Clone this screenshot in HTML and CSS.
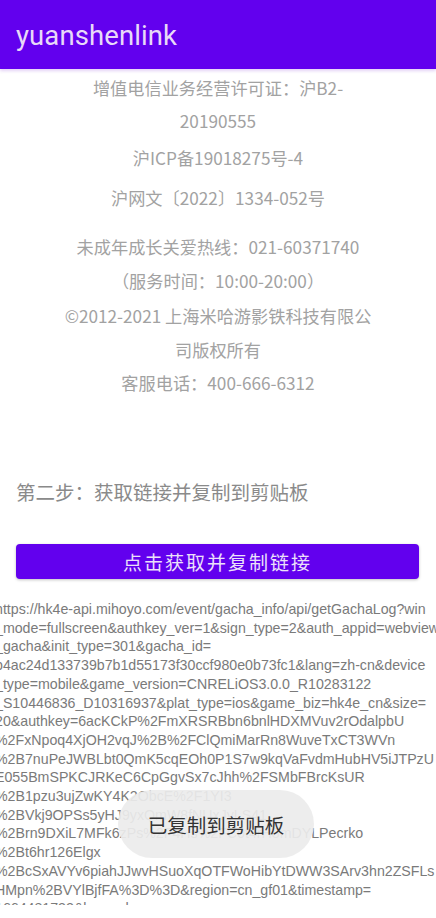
FILE: index.html
```html
<!DOCTYPE html>
<html lang="zh-CN">
<head>
<meta charset="utf-8">
<title>yuanshenlink</title>
<link rel="stylesheet" href="styles.css">
</head>
<body>
<header class="appbar">
  <h1 class="appbar-title">yuanshenlink</h1>
</header>
<main class="content">
  <section class="info">
    <p class="info-p p1">增值电信业务经营许可证：沪B2-<br>20190555</p>
    <p class="info-p p2">沪ICP备19018275号-4</p>
    <p class="info-p p3">沪网文〔2022〕1334-052号</p>
    <p class="info-p p4">未成年成长关爱热线：021-60371740<br>（服务时间：10:00-20:00）</p>
    <p class="info-p p5">©2012-2021 上海米哈游影铁科技有限公<br>司版权所有</p>
    <p class="info-p p6">客服电话：400-666-6312</p>
  </section>
  <p class="step">第二步：获取链接并复制到剪贴板</p>
  <button class="btn">点击获取并复制链接</button>
  <div class="url">
    <div>https://hk4e-api.mihoyo.com/event/gacha_info/api/getGachaLog?win</div>
    <div>_mode=fullscreen&amp;authkey_ver=1&amp;sign_type=2&amp;auth_appid=webview</div>
    <div>_gacha&amp;init_type=301&amp;gacha_id=</div>
    <div>b4ac24d133739b7b1d55173f30ccf980e0b73fc1&amp;lang=zh-cn&amp;device</div>
    <div>_type=mobile&amp;game_version=CNRELiOS3.0.0_R10283122</div>
    <div>_S10446836_D10316937&amp;plat_type=ios&amp;game_biz=hk4e_cn&amp;size=</div>
    <div>20&amp;authkey=6acKCkP%2FmXRSRBbn6bnlHDXMVuv2rOdalpbU</div>
    <div>%2FxNpoq4XjOH2vqJ%2B%2FClQmiMarRn8WuveTxCT3WVn</div>
    <div>%2B7nuPeJWBLbt0QmK5cqEOh0P1S7w9kqVaFvdmHubHV5iJTPzU</div>
    <div>E055BmSPKCJRKeC6CpGgvSx7cJhh%2FSMbFBrcKsUR</div>
    <div>%2B1pzu3ujZwKY4K2ObcE%2F1YI3</div>
    <div>%2BVkj9OPSs5yHJ9yxQmW8fNUxJyLS41</div>
    <div>%2Brn9DXiL7MFk6zPs%2F4Hs%2FC0t4rH8mDYLPecrko</div>
    <div>%2Bt6hr126Elgx</div>
    <div>%2BcSxAVYv6piahJJwvHSuoXqOTFWoHibYtDWW3SArv3hn2ZSFLs</div>
    <div>HMpn%2BVYlBjfFA%3D%3D&amp;region=cn_gf01&amp;timestamp=</div>
    <div>1664481732&amp;lang=zh-cn</div>
  </div>
</main>
<div class="toast">已复制到剪贴板</div>
</body>
</html>
```

FILE: styles.css
```css
html, body {
  margin: 0;
  padding: 0;
  height: 918px;
  overflow: hidden;
  background: #ffffff;
}

body {
  font-family: "Noto Sans CJK SC", "Noto Sans", sans-serif;
  position: relative;
}

.appbar {
  height: 69px;
  background: #6200ee;
  box-shadow: 0 2px 3px rgba(150, 80, 220, 0.25);
  display: flex;
  align-items: center;
  padding: 0 16px;
  position: relative;
  z-index: 1;
}

.appbar-title {
  margin: 0;
  font-family: "Roboto", "Liberation Sans", sans-serif;
  font-weight: 400;
  font-size: 27.5px;
  color: #e8d9f8;
  letter-spacing: 0.1px;
  position: relative;
  top: 1px;
}

.content {
  display: flex;
  flex-direction: column;
}

.info {
  padding-top: 2px;
  text-align: center;
  color: #a2a2a2;
  font-size: 17.2px;
}

.info-p {
  margin: 0;
  line-height: 34px;
}

.p1 { line-height: 33px; }
.p2 { margin-top: 4px; }
.p3 { margin-top: 6px; }
.p4 { margin-top: 15px; }
.p5 { margin-top: 1px; }
.p6 { margin-top: -1px; }

.step {
  margin: 78px 0 0 16px;
  font-size: 19.5px;
  line-height: 28px;
  color: #8a8a8a;
}

.btn {
  margin: 38px 17px 0 16px;
  height: 35px;
  border: none;
  border-radius: 4px;
  background: #6200ee;
  color: #ece0fa;
  font-family: "Noto Sans CJK SC", sans-serif;
  font-size: 19px;
  letter-spacing: 2px;
  padding: 0;
  box-shadow: 0 1px 3px rgba(0, 0, 0, 0.25);
}

.url {
  margin: 21px 0 0 -5px;
  height: 305px;
  overflow: hidden;
  font-family: "Liberation Sans", Arial, sans-serif;
  font-size: 14.2px;
  line-height: 18.7px;
  color: #7a7a7a;
  white-space: nowrap;
}

.toast {
  position: absolute;
  left: 118px;
  top: 790px;
  width: 196px;
  height: 68px;
  border-radius: 34px;
  background: rgba(236, 236, 236, 0.92);
  color: #333333;
  font-size: 19.5px;
  display: flex;
  align-items: center;
  justify-content: center;
}
```
